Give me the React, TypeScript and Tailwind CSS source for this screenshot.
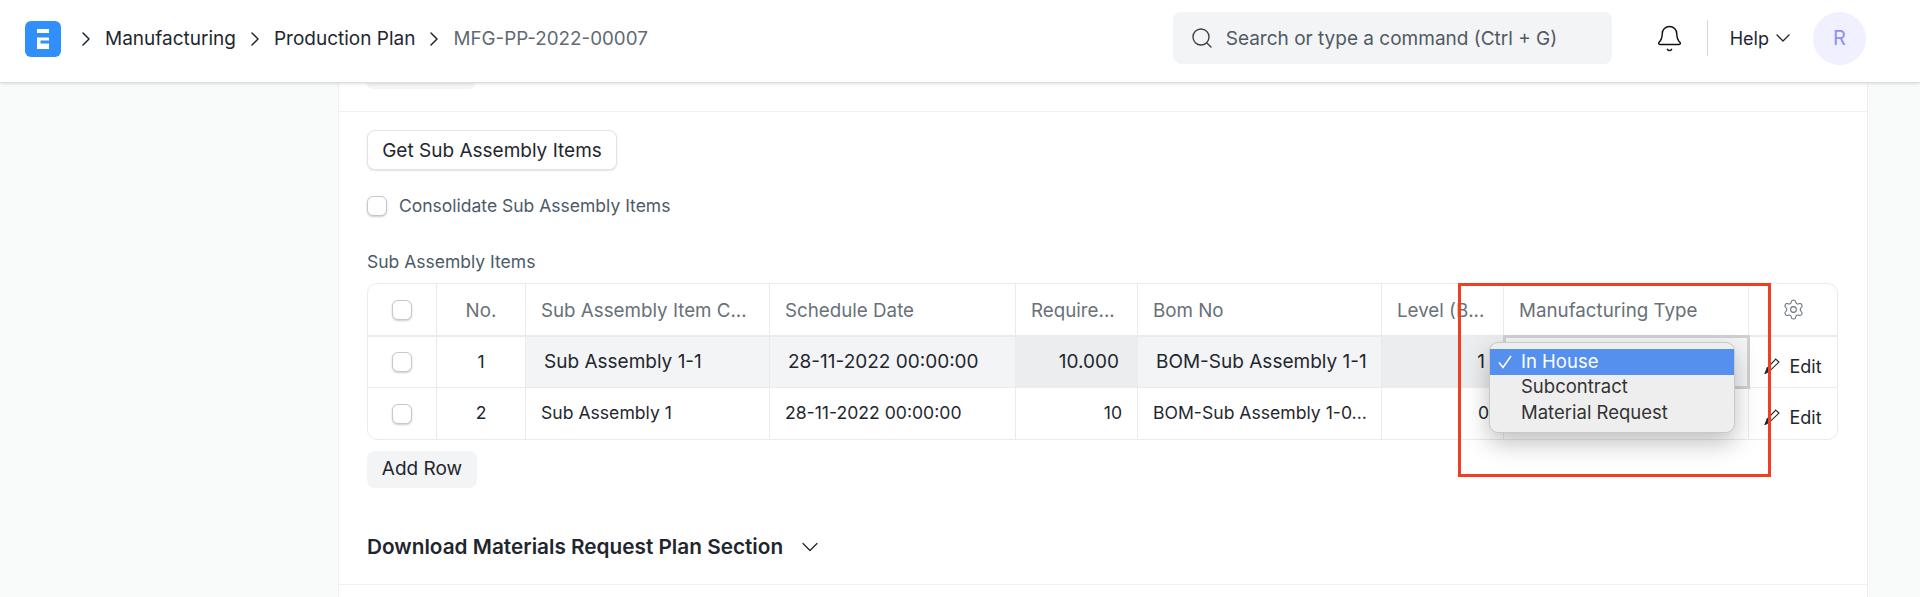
import { Bell, ChevronDown, ChevronRight, Search, Settings } from 'lucide-react';

const cols = 'grid grid-cols-[69px_89px_244px_246px_122px_244px_122px_245px_88px]';
const cell = 'flex items-center border-r border-[#e9ebed] min-w-0';

function Checkbox() {
    return <div className="w-[20px] h-[20px] rounded-[6px] bg-white border border-[#c4c8cd] shadow-[0_1px_2px_rgba(0,0,0,0.2)]" />;
}

function PencilIcon() {
    return (
        <svg width="16" height="16" viewBox="0 0 15 15" fill="none" stroke="#1f272e" strokeWidth="1.1">
            <path d="M11 1 L14 3.8 L5.5 12 L3 9.5 Z" />
            <path d="M3 9.5 L1 14.5 L5.5 12 Z" fill="#1f272e" />
        </svg>
    );
}

function Logo() {
    return (
        <div className="w-9 h-9 mt-[2px] rounded-md bg-[#318ffc] flex items-center justify-center">
            <svg width="14" height="20" viewBox="0 0 14 20" fill="white">
                <rect x="1" y="0" width="12" height="4" />
                <rect x="1" y="8.5" width="12" height="11.5" />
                <rect x="4.5" y="11.5" width="9" height="3" fill="#318ffc" />
            </svg>
        </div>
    );
}

export default function App() {
    return (
        <div className="h-[597px] overflow-hidden bg-[#f9fafa] text-[#1f272e] font-['Inter',sans-serif]">
            <header className="relative z-20 h-[83px] bg-white border-b border-[#dcdfe2] shadow-[0_1px_3px_rgba(0,0,0,0.12)] flex items-center pl-[25px] pr-[54px] pb-[6px]">
                <Logo />
                <nav className="flex items-center ml-[13px] mt-[2px] text-[19px]">
                    <ChevronRight className="w-[24px] h-[24px] mr-[7px]" strokeWidth={1.5} />
                    <span>Manufacturing</span>
                    <ChevronRight className="w-[24px] h-[24px] ml-[7px] mr-[7px]" strokeWidth={1.5} />
                    <span>Production Plan</span>
                    <ChevronRight className="w-[24px] h-[24px] ml-[7px] mr-[7px]" strokeWidth={1.5} />
                    <span className="text-[#5f6a72] text-[18.8px]">MFG-PP-2022-00007</span>
                </nav>
                <div className="ml-auto flex items-center">
                    <div className="w-[439px] h-[52px] rounded-lg bg-[#f3f4f6] flex items-center pl-[17px] text-[19px] text-[#505a62]">
                        <Search className="w-[24px] h-[24px] mr-[12px] text-[#3b444b]" strokeWidth={1.4} />
                        <span className="mt-[2px]">Search or type a command (Ctrl + G)</span>
                    </div>
                    <Bell className="w-[29px] h-[29px] ml-[43px] text-[#111111]" strokeWidth={1.2} />
                    <div className="w-px h-[36px] bg-[#d5d8db] ml-[23px]" />
                    <span className="ml-[22px] text-[18px]">Help</span>
                    <ChevronDown className="w-[24px] h-[24px] ml-[2px]" strokeWidth={1.3} />
                    <div className="w-[53px] h-[53px] rounded-full bg-[#f0f0ff] text-[#8f8ff5] text-[20px] flex items-center justify-center ml-[18px]">R</div>
                </div>
            </header>

            <main className="ml-[338px] w-[1530px] bg-white border-x border-[#eceef0] h-[514px] px-[28px]">
                <div className="h-[6px] w-[108px] bg-[#f3f4f6] rounded-b-lg" />
                <div className="h-[23px] -mx-[28px] border-b border-[#eef0f2]" />
                <button className="mt-[18px] h-[40px] w-[250px] pt-[2px] rounded-lg bg-white border border-[#e2e4e7] shadow-[0_1px_2px_rgba(0,0,0,0.12)] text-[19px] text-[#1f272e] flex items-center justify-center">
                    Get Sub Assembly Items
                </button>
                <div className="mt-[26px] flex items-center gap-[12px] text-[17.5px] text-[#4c5a67] h-[20px]">
                    <Checkbox />
                    <span>Consolidate Sub Assembly Items</span>
                </div>
                <div className="mt-[36px] text-[17.5px] text-[#4c5a67] leading-[20px]">Sub Assembly Items</div>

                <div className="relative mt-[11px] w-[1471px]">
                    <div className="border border-[#e9ebed] rounded-[10px] overflow-hidden">
                        <div className={`${cols} h-[53px] border-b-2 border-[#e9ebed] text-[18.75px] text-[#687178]`}>
                            <div className={`${cell} justify-center`}><Checkbox /></div>
                            <div className={`${cell} justify-center pt-[3px]`}>No.</div>
                            <div className={`${cell} pl-[15px] pt-[3px]`}>Sub Assembly Item C...</div>
                            <div className={`${cell} pl-[15px] pt-[3px]`}>Schedule Date</div>
                            <div className={`${cell} pl-[15px] pt-[3px]`}>Require...</div>
                            <div className={`${cell} pl-[15px] pt-[3px]`}>Bom No</div>
                            <div className={`${cell} pl-[15px] pt-[3px]`}>Level (B...</div>
                            <div className={`${cell} pl-[15px] pt-[3px]`}>Manufacturing Type</div>
                            <div className="flex items-center justify-center"><Settings className="w-[23px] h-[23px]" strokeWidth={1.1} /></div>
                        </div>
                        <div className={`${cols} h-[51px] border-b border-[#e9ebed] text-[19px]`}>
                            <div className={`${cell} justify-center`}><Checkbox /></div>
                            <div className={`${cell} justify-center text-[17.5px]`}>1</div>
                            <div className={`${cell} pl-[18px] bg-[#f3f4f6]`}>Sub Assembly 1-1</div>
                            <div className={`${cell} pl-[18px] bg-[#f3f4f6]`}>28-11-2022 00:00:00</div>
                            <div className={`${cell} justify-end pr-[18px] bg-[#ecedef]`}>10.000</div>
                            <div className={`${cell} pl-[18px] pr-[8px] bg-[#f3f4f6]`}>
                                <span className="block overflow-hidden whitespace-nowrap">BOM-Sub Assembly 1-1</span>
                            </div>
                            <div className={`${cell} justify-end pr-[18px] bg-[#ecedef]`}>1</div>
                            <div className={`${cell} bg-[#f3f4f6]`} />
                            <div className="flex items-center justify-center gap-[9px] pt-[8px] text-[18px]"><PencilIcon />Edit</div>
                        </div>
                        <div className={`${cols} h-[51px] text-[17.6px]`}>
                            <div className={`${cell} justify-center`}><Checkbox /></div>
                            <div className={`${cell} justify-center`}>2</div>
                            <div className={`${cell} pl-[15px]`}>Sub Assembly 1</div>
                            <div className={`${cell} pl-[15px]`}>28-11-2022 00:00:00</div>
                            <div className={`${cell} justify-end pr-[15px]`}>10</div>
                            <div className={`${cell} pl-[15px]`}>BOM-Sub Assembly 1-0...</div>
                            <div className={`${cell} justify-end pr-[14px]`}>0</div>
                            <div className={cell} />
                            <div className="flex items-center justify-center gap-[9px] pt-[7px] text-[18px]"><PencilIcon />Edit</div>
                        </div>
                    </div>

                    {/* focus box of the open cell */}
                    <div className="absolute left-[1136px] top-[52px] w-[247px] h-[54px] border-[3px] border-[#cfd0d2] bg-[#f3f4f6]" />

                    {/* native select menu */}
                    <div className="absolute left-[1122px] top-[59px] w-[246px] h-[91px] rounded-[9px] bg-[#eeeeee] border border-[#c9c9c9] shadow-[0_10px_24px_rgba(0,0,0,0.25)] pt-[6px] text-[18.5px] text-[#333333]">
                        <div className="relative h-[25.5px] bg-[#5590ee] text-white pl-[31px] flex items-center">
                            <svg className="absolute left-[8px] top-[6px]" width="14" height="14" viewBox="0 0 14 14" fill="none" stroke="white" strokeWidth="1.6">
                                <path d="M1 7.5 L5 12.5 L13 1" />
                            </svg>
                            In House
                        </div>
                        <div className="h-[25.5px] pl-[31px] flex items-center">Subcontract</div>
                        <div className="h-[25.5px] pl-[31px] flex items-center">Material Request</div>
                    </div>

                    {/* annotation */}
                    <div className="absolute left-[1091px] top-0 w-[313px] h-[194px] border-[3px] border-[#ee3f24]" />
                </div>

                <div className="mt-[11px] w-[110px] h-[37px] rounded-lg bg-[#f3f4f6] text-[19px] flex items-center justify-center">Add Row</div>
                <div className="mt-[47px] h-[24px] flex items-center text-[20.75px] font-semibold leading-[24px]">
                    Download Materials Request Plan Section
                    <ChevronDown className="w-[28px] h-[28px] ml-[13px]" strokeWidth={1.1} />
                </div>
                <div className="mt-[25px] -mx-[28px] border-b border-[#eef0f2]" />
            </main>
        </div>
    );
}
